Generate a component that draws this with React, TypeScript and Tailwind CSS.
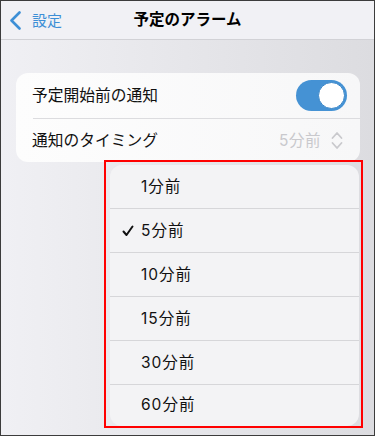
const options = [
  { label: '1分前', h: 'h-[43px]' },
  { label: '5分前', h: 'h-[44px]', checked: true },
  { label: '10分前', h: 'h-[44px]' },
  { label: '15分前', h: 'h-[44px]' },
  { label: '30分前', h: 'h-[44px]' },
  { label: '60分前', h: 'h-[41px]' },
];

export default function App() {
  return (
    <div
      className="relative w-[375px] h-[436px] overflow-hidden border border-[#3c3c3c] bg-gradient-to-r from-[#f0f0f4] to-[#dcdce0]"
      style={{ fontFamily: '"Inter", "Noto Sans CJK JP", sans-serif' }}
    >
      {/* ナビゲーションバー */}
      <div className="relative h-[39px] flex items-center bg-[#f1f1f5] border-b border-[#d2d2d6]">
        <div className="flex items-center pl-[8px] text-[#3d8fd6]">
          <svg width="13" height="19" viewBox="0 0 13 19" fill="none" stroke="currentColor" strokeWidth="2.6" strokeLinecap="round" strokeLinejoin="round">
            <path d="M10.5 1.5 L2.5 9.5 L10.5 17.5" />
          </svg>
          <span className="text-[15px] ml-[10px] leading-none">設定</span>
        </div>
        <h1 className="absolute left-0 right-0 text-center text-[15.5px] font-bold text-black leading-none pointer-events-none">
          予定のアラーム
        </h1>
      </div>

      {/* 設定カード */}
      <div className="mt-[33px] mx-[15px] w-[344px] rounded-[12px] bg-gradient-to-r from-[#fdfdfd] to-[#f7f7f8]">
        <div className="h-[45px] flex items-center justify-between pl-[16px] pr-[13px]">
          <span className="text-[15.75px] text-[#111]">予定開始前の通知</span>
          <div className="w-[51px] h-[31px] rounded-full bg-[#4592d4] flex items-center justify-end pr-[2px]">
            <div className="w-[27px] h-[27px] rounded-full bg-white border border-[#3a86c8]" />
          </div>
        </div>
        <div className="ml-[17px] border-t border-[#dcdcdf]" />
        <div className="h-[43px] flex items-center justify-between pl-[16px] pr-[17px]">
          <span className="text-[15.75px] text-[#111]">通知のタイミング</span>
          <div className="flex items-center gap-[10px] text-[#c9c9cd]">
            <span className="text-[15.5px] tracking-[0.5px]">5分前</span>
            <svg width="12" height="19" viewBox="0 0 12 19" fill="none" stroke="currentColor" strokeWidth="1.8" strokeLinecap="round" strokeLinejoin="round">
              <path d="M1.5 7 L6 2 L10.5 7" />
              <path d="M1.5 12 L6 17 L10.5 12" />
            </svg>
          </div>
        </div>
      </div>

      {/* 選択メニュー */}
      <div className="absolute left-[103px] top-[159px] w-[259px] h-[268px] border-2 border-[#ff0000]">
        <div className="absolute left-[4px] top-[3px] w-[249px] h-[261px] rounded-[12px] bg-[#f3f3f5] overflow-hidden">
          {options.map((opt, i) => (
            <div
              key={opt.label}
              className={`${opt.h} flex items-center ${i > 0 ? 'border-t border-[#d6d6d9]' : ''}`}
            >
              <span className="w-[31px] flex justify-end pr-[7px]">
                {opt.checked && (
                  <svg width="12" height="12" viewBox="0 0 12 12" fill="none" stroke="#111" strokeWidth="2" strokeLinecap="round" strokeLinejoin="round">
                    <path d="M1.5 6.5 L4.5 10 L10.5 1.5" />
                  </svg>
                )}
              </span>
              <span className="text-[15.5px] text-[#111] tracking-[1px]">{opt.label}</span>
            </div>
          ))}
        </div>
      </div>
    </div>
  );
}
